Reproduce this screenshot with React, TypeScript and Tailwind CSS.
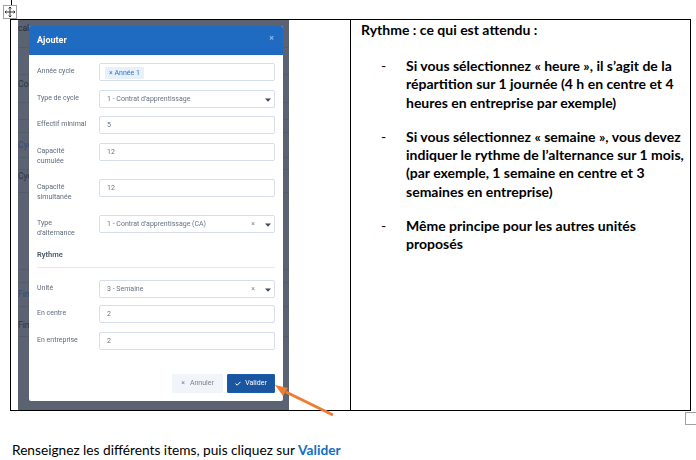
const modalFont = { fontFamily: 'Roboto, sans-serif' };

// rows of the page behind the dialog, only their left end shows
const backRows = [
  { h: "h-[28px] pt-[2px]", text: "cal", color: "text-[#252b36]" },
  { h: "h-[27px]", text: "" },
  { h: "h-[28px] pt-[3px]", text: "Con", color: "text-[#2c3340]" },
  { h: "h-[17px]", text: "" },
  { h: "h-[13px]", text: "" },
  { h: "h-[25px] pt-[6px]", text: "Cyc", color: "text-[#2c4a78]" },
  { h: "h-[12px]", text: "" },
  { h: "h-[23px]", text: "Cyc", color: "text-[#2c3340]" },
  { h: "h-[77px]", text: "" },
  { h: "h-[13px]", text: "" },
  { h: "h-[24px] pt-[5px]", text: "Fin", color: "text-[#2c4a78]" },
  { h: "h-[30px] pt-[12px]", text: "Fina", color: "text-[#2c3340]" },
];

function Caret() {
  return (
    <svg width="6" height="4" viewBox="0 0 6 4" className="shrink-0">
      <path d="M0 0.5h6L3 3.8z" fill="#3f4a5a" />
    </svg>
  );
}

function Field({
  label,
  value,
  select,
  clear,
  children,
  className = "",
}: {
  label: string[];
  value?: string;
  select?: boolean;
  clear?: boolean;
  children?: React.ReactNode;
  className?: string;
}) {
  return (
    <div className={`flex items-start ${className}`}>
      <div className="w-[62px] shrink-0 pt-[3px] text-[7px] leading-[10px] text-[#5d6b7c]">
        {label.map((l) => (
          <div key={l}>{l}</div>
        ))}
      </div>
      <div className="flex h-[18px] w-[176px] items-center rounded-[2px] border border-[#d5deea] bg-white pt-px pr-[3px] pl-[7px] text-[7px] text-[#667282]">
        {children ?? <span className="flex-1 truncate">{value}</span>}
        {clear && <span className="mr-[10px] text-[7px] text-[#7d8794]">×</span>}
        {select && <Caret />}
      </div>
    </div>
  );
}

function Modal() {
  return (
    <div className="absolute top-[6px] left-[11px] h-[375px] w-[254px] rounded-[2px] bg-white blur-[0.3px]">
      <div className="flex h-[29px] justify-between rounded-t-[2px] bg-[#1f6bc1] pr-[9px] pl-[8px]">
        <span className="text-[9px] leading-[29px] font-bold text-white">Ajouter</span>
        <span className="pt-[8px] text-[9px] leading-none font-bold text-[#8fb4e2]">×</span>
      </div>
      <div className="px-[8px] pt-[8px]">
        <Field label={["Année cycle"]} className="h-[27px]">
          <span className="-ml-[2px] rounded-[1px] bg-[#e8f0fa] px-[4px] py-[1px] text-[7px] leading-[10px] text-[#2f76c8]">
            × Année 1
          </span>
        </Field>
        <Field label={["Type de cycle"]} value="1 - Contrat d'apprentissage" select className="h-[26px]" />
        <Field label={["Effectif minimal"]} value="5" className="h-[27px]" />
        <Field label={["Capacité", "cumulée"]} value="12" className="h-[36px]" />
        <Field label={["Capacité", "simultanée"]} value="12" className="h-[36px]" />
        <Field label={["Type", "d'alternance"]} value="1 - Contrat d'apprentissage (CA)" select clear className="h-[34px]" />
        <div className="border-b border-[#e2e8f0] pt-px pb-[7px] text-[7.5px] leading-[10px] font-semibold text-[#4d5a6a]">
          Rythme
        </div>
        <Field label={["Unité"]} value="3 - Semaine" select clear className="mt-[12px] h-[25px]" />
        <Field label={["En centre"]} value="2" className="h-[27px]" />
        <Field label={["En entreprise"]} value="2" />
        <div className="mt-[24px] flex justify-end gap-[4px]">
          <div className="flex h-[19px] w-[51px] items-center justify-center gap-[5px] rounded-[1px] bg-[#f1f4f8] text-[7px] text-[#79838f]">
            <span>×</span>
            <span>Annuler</span>
          </div>
          <div className="flex h-[19px] w-[48px] items-center justify-center gap-[4px] rounded-[1px] border border-[#1a5cab] bg-[#1a55a0] text-[7px] text-white">
            <svg width="6" height="5" viewBox="0 0 6 5" fill="none">
              <path d="M0.5 2.6 2.2 4.2 5.5 0.8" stroke="#fff" strokeWidth="1" />
            </svg>
            <span>Valider</span>
          </div>
        </div>
      </div>
    </div>
  );
}

function Capture() {
  return (
    <div className="relative h-[390px] w-[271px] shrink-0 overflow-hidden bg-[#5b6372]" style={modalFont}>
      {backRows.map((row, i) => (
        <div key={i} className={`${row.h} border-b border-[#535b69] text-[8.5px] leading-[12px] ${row.color ?? ""}`}>
          {row.text}
        </div>
      ))}
      <Modal />
    </div>
  );
}

export default function App() {
  return (
    <div className="relative h-[460px] w-[696px] overflow-hidden bg-white" style={{ fontFamily: "Lato, sans-serif" }}>
      {/* Word table handles */}
      <div className="absolute top-0 left-[11px] h-[5px] w-px bg-black" />
      <div className="absolute top-[5px] left-[3px] flex h-[14px] w-[14px] items-center justify-center border border-[#a0a0a0] bg-white">
        <svg width="12" height="12" viewBox="0 0 12 12" fill="none" stroke="#333" strokeWidth="1">
          <path d="M6 1v10M1 6h10M4.6 2.4 6 1l1.4 1.4M4.6 9.6 6 11l1.4-1.4M2.4 4.6 1 6l1.4 1.4M9.6 4.6 11 6 9.6 7.4" />
        </svg>
      </div>
      <div className="absolute top-[412px] left-[685px] h-[13px] w-[13px] border border-[#a0a0a0]" />

      <div className="pt-[19px] pl-[10px]">
        <div className="flex h-[392px] w-[681px] border border-black">
          <div className="w-[340px] shrink-0 border-r border-black pl-[7px]">
            <Capture />
          </div>
          <div className="pt-px pl-[10px] text-[14px] leading-[18.3px] font-bold text-black">
            <div className="h-[36px]">Rythme : ce qui est attendu :</div>
            {[
              ["Si vous sélectionnez « heure », il s’agit de la", "répartition sur 1 journée (4 h en centre et 4", "heures en entreprise par exemple)"],
              ["Si vous sélectionnez « semaine », vous devez", "indiquer le rythme de l’alternance sur 1 mois,", "(par exemple, 1 semaine en centre et 3", "semaines en entreprise)"],
              ["Même principe pour les autres unités", "proposés"],
            ].map((lines) => (
              <div key={lines[0]} className="mb-[16px] flex">
                <span className="w-[45px] pl-[20px] font-normal">-</span>
                <div>
                  {lines.map((l) => (
                    <div key={l} className="whitespace-nowrap">{l}</div>
                  ))}
                </div>
              </div>
            ))}
          </div>
        </div>
      </div>

      <p className="pt-[30px] pl-[12px] text-[13.7px] leading-[18px] text-black">
        Renseignez les différents items, puis cliquez sur <span className="font-bold text-[#0f70c0]">Valider</span>
      </p>

      <svg className="absolute top-[380px] left-[270px]" width="70" height="40" viewBox="0 0 70 40" fill="none">
        <path d="M63 35 16 12" stroke="#ed7d31" strokeWidth="3" />
        <path d="M5 5 18 8 13 16z" fill="#ed7d31" />
      </svg>
    </div>
  );
}
